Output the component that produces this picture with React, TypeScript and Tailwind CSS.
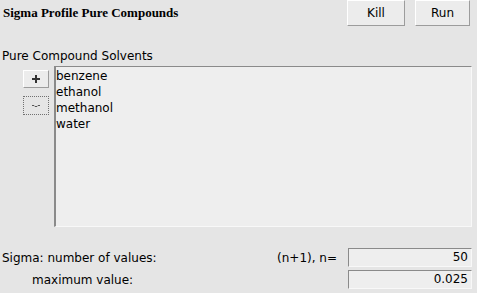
import React from "react";

const COMPOUNDS = ["benzene", "ethanol", "methanol", "water"];

const raised =
  "border border-t-[#ffffff] border-l-[#ffffff] border-b-[#9c9c9c] border-r-[#9c9c9c] bg-[#ececec]";
const sunken =
  "border border-t-[#8a8a8a] border-l-[#8a8a8a] border-b-[#f8f8f8] border-r-[#f8f8f8] bg-[#eeeeee]";

function Field({ value }: { value: string }) {
  return (
    <div className={`h-[19px] w-[124px] ${sunken} pr-[3px] text-right leading-[17px]`}>{value}</div>
  );
}

export default function App() {
  return (
    <div
      className="flex h-[293px] w-[477px] flex-col bg-[#e5e5e5] text-[12px] text-black"
      style={{ fontFamily: '"DejaVu Sans", sans-serif' }}
    >
      {/* ── Header ─────────────────────────────────────────── */}
      <div className="flex h-[27px] items-start">
        <h1
          className="pl-[3px] pt-[5px] text-[13px] font-bold leading-[16px]"
          style={{ fontFamily: '"Liberation Serif", serif' }}
        >
          Sigma Profile Pure Compounds
        </h1>
        <div className="ml-auto mr-[7px] flex gap-[10px]">
          <button type="button" className={`h-[26px] w-[58px] ${raised}`}>
            Kill
          </button>
          <button type="button" className={`h-[26px] w-[55px] ${raised}`}>
            Run
          </button>
        </div>
      </div>

      {/* ── Solvent list ───────────────────────────────────── */}
      <p className="mt-[22px] pl-[2px] leading-[15px]">Pure Compound Solvents</p>
      <div className="mt-[2px] flex">
        <div className="ml-[23px] mt-[4px] flex w-[26px] flex-col gap-[8px]">
          <button type="button" className={`flex h-[18px] w-[26px] items-center justify-center ${raised}`}>
            <svg width="10" height="10" viewBox="0 0 10 10">
              <path d="M5 1v8M1 5h8" stroke="#333" strokeWidth="2" />
            </svg>
          </button>
          <button
            type="button"
            className="flex h-[19px] w-[26px] items-center justify-center border border-dotted border-[#707070] bg-[#e5e5e5]"
          >
            <svg width="8" height="4" viewBox="0 0 8 4">
              <path d="M0 1.5h2l1 1h2l1-1h2" stroke="#555" strokeWidth="1" fill="none" />
            </svg>
          </button>
        </div>
        <ul className={`ml-[5px] h-[161px] w-[418px] ${sunken} border-l-2 pl-[0px] pt-[1px]`}>
          {COMPOUNDS.map((c) => (
            <li key={c} className="leading-[16px]">
              {c}
            </li>
          ))}
        </ul>
      </div>

      {/* ── Sigma settings ─────────────────────────────────── */}
      <div className="mt-[21px] flex flex-col gap-[3px]">
        <div className="flex items-center">
          <span className="pl-[2px]">Sigma: number of values:</span>
          <span className="ml-auto mr-[11px]">(n+1), n=</span>
          <div className="mr-[5px]">
            <Field value="50" />
          </div>
        </div>
        <div className="flex items-center">
          <span className="pl-[32px]">maximum value:</span>
          <div className="ml-auto mr-[5px]">
            <Field value="0.025" />
          </div>
        </div>
      </div>
    </div>
  );
}
